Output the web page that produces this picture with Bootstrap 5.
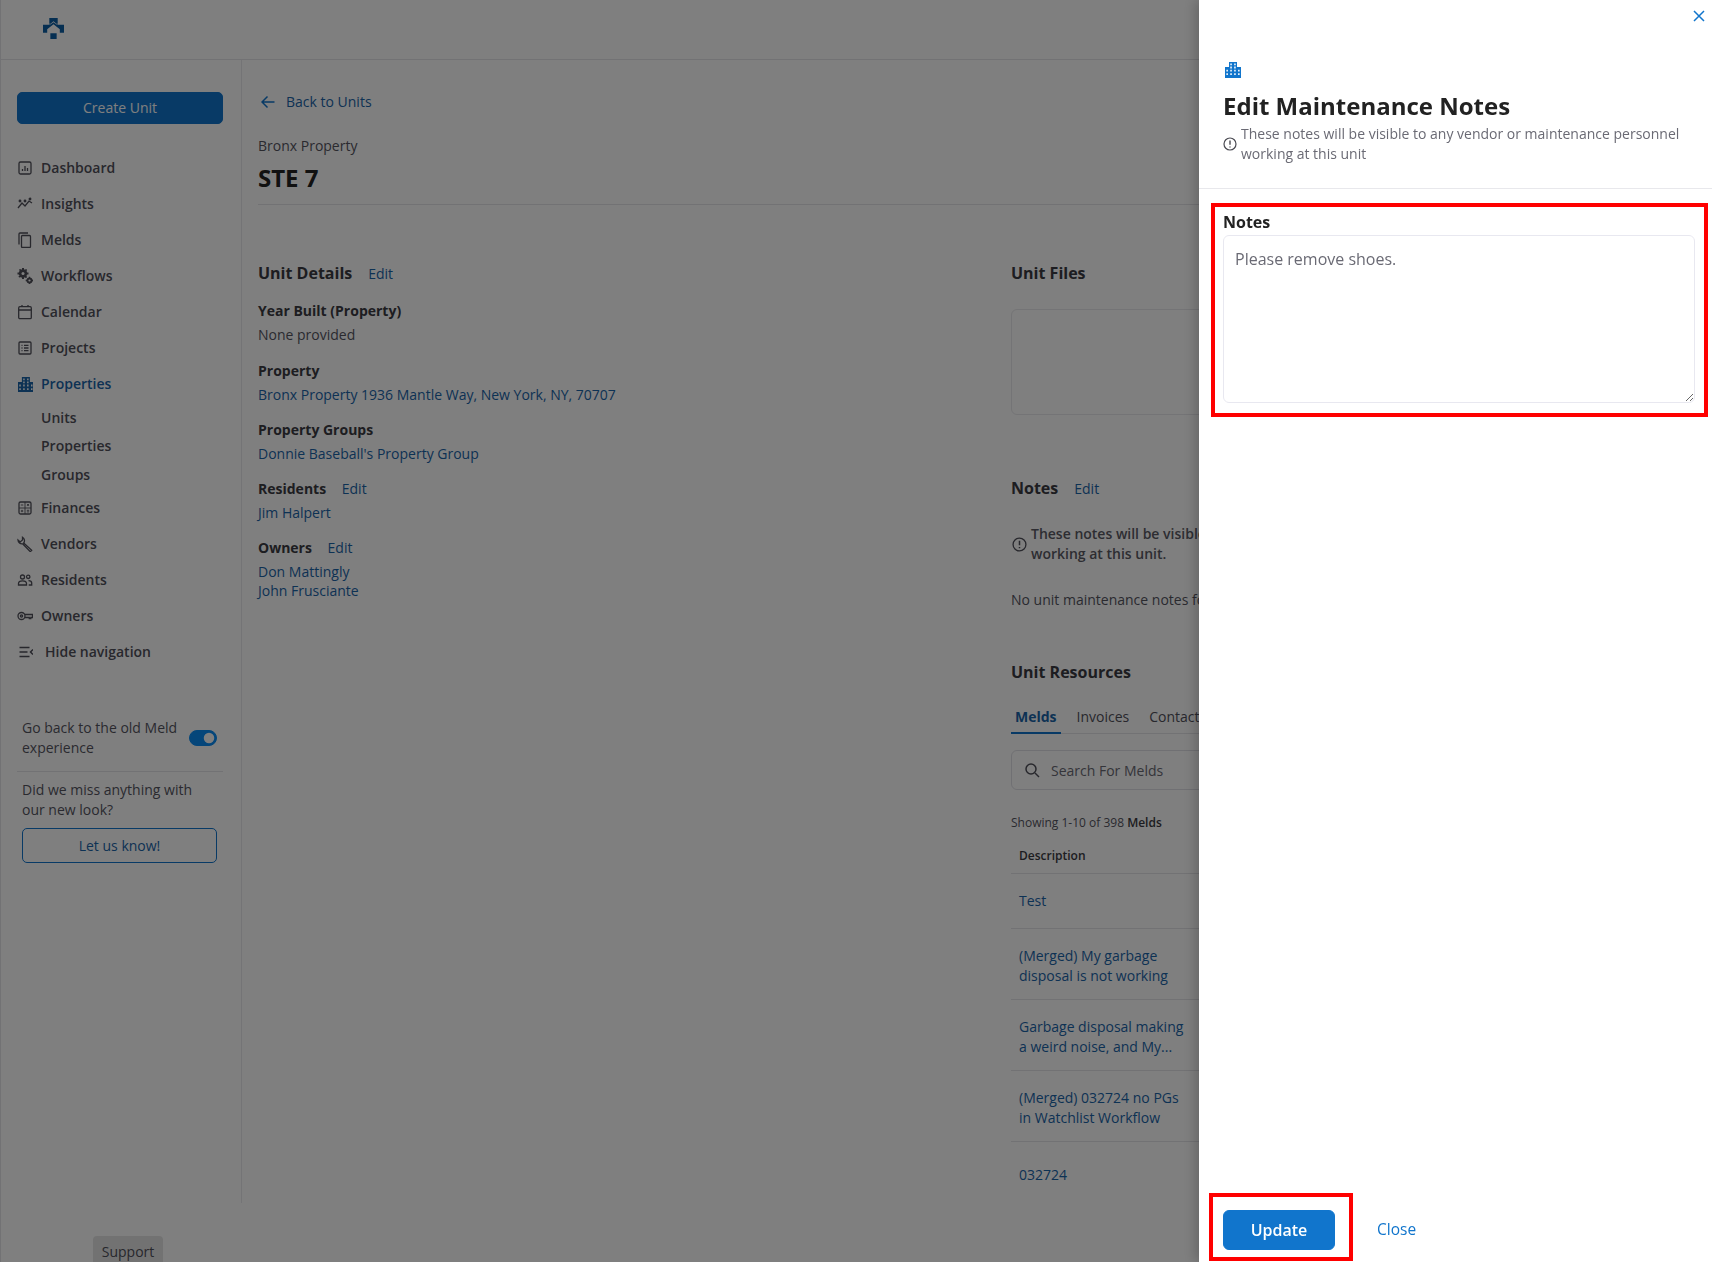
<!DOCTYPE html>
<html lang="en">
<head>
<meta charset="utf-8">
<title>Edit Maintenance Notes</title>
<link href="https://cdn.jsdelivr.net/npm/bootstrap@5.3.0/dist/css/bootstrap.min.css" rel="stylesheet">
<style>
:root{--brand:#1175cc;--link:#1a64a8;--ink:#55555f;--head:#222;}
html,body{height:100%;}
body{font-family:"Open Sans","Liberation Sans",sans-serif;font-size:14px;line-height:20px;color:var(--ink);background:#fff;overflow:hidden;}
a{color:var(--link);text-decoration:none;}
.app-root{height:1262px;border-left:1px solid #e4e4e8;}
.app-top{height:60px;border-bottom:1px solid #e4e4e8;padding:18px 0 0 42px;}
.app-top svg{display:block;width:21px;height:21px;fill:#0d5fa5;}
.app-side{width:241px;height:1143px;flex:none;border-right:1px solid #e8e8ec;padding:32px 16px 0 16px;}
.create-btn{display:block;width:206px;height:32px;padding:0;font-size:14px;line-height:30px;background:var(--brand);border:1px solid var(--brand);border-radius:5px;color:#fff;}
.side-list{margin:26px 0 0;padding:0;list-style:none;}
.side-link{display:flex;align-items:center;height:36px;color:#50505a;font-size:14px;font-weight:600;gap:8px;}
.side-link svg{width:16px;height:16px;flex:none;fill:none;stroke:currentColor;stroke-width:1.3;}
.side-link.on{color:var(--link);}
.side-sub{display:block;height:28.4px;line-height:28px;padding-left:24px;color:#50505a;font-weight:600;}
.side-sub-wrap{margin:1px 0 1px;padding-top:1px;}
.wide-ico{margin-right:4px;}
.old-row{margin:48px 0 0 5px;display:flex;align-items:center;justify-content:space-between;width:195px;}
.old-row .form-check-input{width:28px;height:16px;margin:0;float:none;background-color:#0a8cf5;border-color:#0a8cf5;}
.old-row .form-switch{padding:0;min-height:0;margin:0;display:flex;}
.side-rule{margin:13px 0 8px;border-top:1px solid #e4e4e8;opacity:1;width:206px;}
.miss-wrap{margin-left:5px;width:195px;}
.know-btn{display:block;width:195px;height:35px;margin-top:8px;padding:0;font-size:14px;line-height:33px;border:1px solid var(--brand);color:var(--link);border-radius:5px;background:#fff;}
.app-main{padding:32px 0 0 16px;flex:1;min-width:0;}
.back-link{display:flex;align-items:center;height:20px;gap:11px;padding-left:3px;}
.back-link svg{width:14px;height:14px;fill:none;stroke:var(--brand);stroke-width:1.5;}
.crumb{margin:24px 0 0;}
.unit-name{font-size:24px;line-height:32px;font-weight:700;color:var(--head);margin:6px 0 0;}
.head-rule{margin:10px 0 0;border-top:1px solid #e4e4e8;opacity:1;}
.cols{display:flex;margin-top:56px;}
.col-left{width:753px;flex:none;}
.col-right{width:680px;flex:none;}
.sec-title{font-size:16px;line-height:24px;font-weight:700;color:#3a3a42;margin:0;display:inline-block;}
.sec-edit{margin-left:16px;}
.fact{margin-bottom:15px;}
.fact-first{margin-bottom:16px;}
.fact-label{font-weight:700;color:#3a3a42;margin:0 0 4px;}
.fact-label a{font-weight:400;margin-left:12px;}
.facts{margin-top:16px;}
.fact .tight{line-height:19px;}
.files-box{height:106px;margin-top:24px;border:1px solid #e8e8ec;border-radius:6px;}
.notes-head{margin-top:61px;}
.info-line{display:flex;align-items:center;gap:4px;margin-top:24px;width:500px;color:#5a5a64;font-weight:600;}
.info-line svg{width:15px;height:15px;flex:none;fill:none;stroke:#50505a;margin:0 0 0 1px;}
.no-notes{margin:26px 0 0;}
.res-head{margin-top:50px;}
.res-tabs{margin-top:19px;border-bottom:1px solid #e4e4e8;display:flex;gap:10px;height:31px;}
.res-tab{padding:0 5px;height:31px;line-height:27px;color:#50505a;}
.res-tab.on{color:var(--link);font-weight:700;border-bottom:2px solid var(--brand);padding:0 4px;margin-right:1px;}
.search-box{position:relative;margin-top:16px;height:40px;}
.search-box input{height:40px;padding-left:39px;font-size:14px;border-color:#e0e0e6;border-radius:6px;box-shadow:none;}
.search-box input::placeholder{color:#6a6a74;}
.search-box svg{position:absolute;left:13px;top:12px;width:16px;height:16px;fill:none;stroke:#50505a;stroke-width:1.5;}
.showing{font-size:12px;line-height:16px;margin-top:25px;}
.showing b{font-weight:600;color:#3a3a42;}
.meld-table{margin:17px 0 0;width:680px;border-color:#e4e4e8;}
.meld-table th{font-size:12px;font-weight:600;color:#3a3a42;padding:0 8px 9px;line-height:16px;border-bottom:1px solid #e4e4e8;background:transparent;}
.meld-table td{padding:17px 8px 13px;line-height:20px;font-size:14px;background:transparent;border-bottom:1px solid #e4e4e8;}
.meld-table tr.row-one td{padding:17px 8px 17px;}
.meld-table .d-col{width:182px;}
.meld-table tr.row-end td{padding-top:23px;border-bottom:0;}
.support-tab{position:fixed;left:93px;top:1236px;width:70px;height:33px;background:#e5e5e5;border-radius:4px 4px 0 0;text-align:center;line-height:31px;color:#50505a;}
.edit-panel{width:513px;height:1262px;z-index:1045;box-shadow:-4px 0 12px rgba(0,0,0,.2);color:#6a6a74;}
.close-row{display:flex;justify-content:flex-end;padding:10px 7px 0 0;height:62px;}
.close-x{width:12px;height:12px;padding:0;border:0;background:none;display:block;}
.close-x svg{display:block;width:12px;height:12px;stroke:var(--brand);stroke-width:1.5;fill:none;}
.panel-head{padding:0 24px 24px;border-bottom:1px solid #e8e8ec;height:127px;}
.building{width:16px;height:16px;display:block;fill:currentColor;}
.panel-bld{color:var(--brand);margin-left:2px;}
.panel-title{font-size:24px;line-height:32px;font-weight:700;color:#222;margin:12px 0 0;}
.panel-info{display:flex;align-items:center;gap:4px;margin-top:2px;}
.panel-info svg{width:14px;height:14px;flex:none;fill:none;stroke:#4a4a52;}
.shot-mark{border:4px solid #f00;}
.notes-mark{margin:14px 4px 0 12px;padding:5px 9px 10px 8px;height:214px;}
.notes-label{display:block;margin:0 0 3px;font-size:16px;line-height:20px;font-weight:700;color:#222;}
.notes-input{height:168px;font-size:16px;line-height:24px;color:#6a6a74;border-color:#e8e8f0;border-radius:6px;padding:11px 11px;}
.panel-foot{margin-top:auto;display:flex;align-items:flex-start;padding:0 0 1px 10px;}
.update-mark{padding:13px 14px 7px 10px;width:144px;height:68px;}
.update-btn{width:112px;height:40px;padding:0;font-size:16px;line-height:38px;font-weight:600;background:var(--brand);border-color:var(--brand);border-radius:6px;color:#fff;}
.close-link{margin:24px 0 0 24px;font-size:15.5px;line-height:24px;color:var(--brand);}
</style>
</head>
<body>
<svg width="0" height="0" class="position-absolute">
  <symbol id="bld" viewBox="0 0 16 16"><path fill-rule="evenodd" d="M4 0h8v5h4v11H0V5h4zM5.300 1.500v1.800h1.500V1.500zm3.900 0v1.800h1.500V1.500zM5.300 4.600v1.800h1.500V4.600zm3.900 0v1.800h1.500V4.600zM1.400 7.700v1.800h1.500V7.700zm3.900 0v1.800h1.500V7.700zm3.900 0v1.800h1.500V7.700zm3.900 0v1.800h1.500V7.700zM1.400 11.300v1.800h1.500v-1.800zm3.900 0v1.800h1.500v-1.800zm3.900 0v1.800h1.500v-1.800zm3.900 0v1.800h1.500v-1.800z"/></symbol>
  <symbol id="inf" viewBox="0 0 14 14"><circle cx="7" cy="7" r="6" stroke-width="1.200"/><path d="M7 3.600v4.200M7 9.400v1.200" stroke-width="1.400"/></symbol>
</svg>

<div class="app-root">
  <div class="app-top">
    <svg viewBox="0 0 20 20"><path d="M6 0h8v5.500h-1.200L10 3 7.200 5.500H6zM0 6.500h5.800l.2-.2v-.4l1 .4L10 4l3 2.300.9-.4.300.6H20v7.500h-4v-3.300l-6-4.800-6 4.800v3.300H0zM7 14.500h6V20H7z"/></svg>
  </div>
  <div class="d-flex">
    <aside class="app-side">
      <button type="button" class="btn create-btn">Create Unit</button>
      <ul class="side-list">
        <li><a class="side-link" href="#"><svg viewBox="0 0 16 16"><rect x="2" y="2" width="12" height="12" rx="1.500"/><path d="M5.500 11V9M8 11V6M10.500 11V8"/></svg>Dashboard</a></li>
        <li><a class="side-link" href="#"><svg viewBox="0 0 16 16"><path d="M1 12l4-5 3 3 4-5 3 2"/><circle cx="3" cy="5" r=".8" fill="currentColor"/><circle cx="8" cy="5" r=".8" fill="currentColor"/><circle cx="13" cy="3" r=".8" fill="currentColor"/></svg>Insights</a></li>
        <li><a class="side-link" href="#"><svg viewBox="0 0 16 16"><rect x="4.500" y="3.500" width="9" height="12" rx="1"/><path d="M2 12.500V2a1 1 0 0 1 1-1h8"/></svg>Melds</a></li>
        <li><a class="side-link" href="#"><svg viewBox="0 0 16 16"><g fill="currentColor" stroke="none"><circle cx="6" cy="5.500" r="4.200"/><path d="M5 0h2v2H5zM5 9h2v2H5zM.5 4.500h2v2h-2zM9.500 4.500h2v2h-2zM2 1.500l1.500-.5 1 1.500L3 3.500zM8.500 1l1.500.5-.5 2-1.500-1zM2 9.500l-.5-1.500 2-.5 1 1.500zM10 9.500l-1.500.5-1-1.500 2-1z"/><circle cx="12.500" cy="12.500" r="3"/><path d="M11.800 8.700h1.400v1.600h-1.400zM11.800 14.700h1.400v1.600h-1.400zM8.700 11.800h1.600v1.400H8.700zM14.700 11.800h1.600v1.400h-1.600z"/></g><circle cx="6" cy="5.500" r="1.500" fill="#fff" stroke="none"/><circle cx="12.500" cy="12.500" r="1.100" fill="#fff" stroke="none"/></svg>Workflows</a></li>
        <li><a class="side-link" href="#"><svg viewBox="0 0 16 16"><rect x="1.700" y="2.700" width="12.600" height="12" rx="1.200"/><path d="M1.700 6h12.600M5 1v2M11 1v2"/></svg>Calendar</a></li>
        <li><a class="side-link" href="#"><svg viewBox="0 0 16 16"><rect x="2" y="2" width="12" height="12" rx="1"/><path d="M4.500 5.300h1M7 5.300h4.500M4.500 8h1M7 8h4.500M4.500 10.700h1M7 10.700h4.500"/></svg>Projects</a></li>
        <li><a class="side-link on" href="#"><svg viewBox="-1 -1 18 18" style="stroke:none;fill:currentColor"><use href="#bld"/></svg>Properties</a>
          <div class="side-sub-wrap">
            <a class="side-sub" href="#">Units</a>
            <a class="side-sub" href="#">Properties</a>
            <a class="side-sub" href="#">Groups</a>
          </div>
        </li>
        <li><a class="side-link" href="#"><svg viewBox="0 0 16 16"><rect x="2" y="2" width="12" height="12" rx="1.500"/><path d="M8 2v12M2 8h12M3.800 5h2.500M10 3.900l2 2M12 3.900l-2 2M3.800 11h2.500M5 9.800v2.400M9.800 10.300h2.400M9.800 11.900h2.400" stroke-width=".9"/></svg>Finances</a></li>
        <li><a class="side-link" href="#"><svg viewBox="0 0 16 16"><path d="M5.500 1.200A4 4 0 0 1 6.700 7l8 7.200-1.400 1.500L5.600 7.800A4 4 0 0 1 1 4l2.200 1.900L5.500 4z"/></svg>Vendors</a></li>
        <li><a class="side-link" href="#"><svg viewBox="0 0 16 16"><circle cx="5.500" cy="5" r="2"/><circle cx="11.200" cy="4.800" r="1.700"/><path d="M1.500 13v-1.500c0-1.800 1.800-2.700 4-2.700s4 .9 4 2.700V13zM11.500 8.600c1.800 0 3.200.9 3.200 2.500V13h-3"/></svg>Residents</a></li>
        <li><a class="side-link" href="#"><svg viewBox="0 0 16 16"><circle cx="4.500" cy="8" r="3.500"/><circle cx="4.500" cy="8" r="1.100"/><path d="M8 6.500h7.500v3h-1.700v1.200h-1.500V9.500H8"/></svg>Owners</a></li>
        <li><a class="side-link" href="#"><svg class="wide-ico" viewBox="-1 0 16 16" style="stroke-width:1.500"><path d="M1.500 3.500h10M1.500 8h8M1.500 12.500h10M15 5.500 12.500 8 15 10.500"/></svg>Hide navigation</a></li>
      </ul>
      <div class="old-row">
        <span style="width:160px">Go back to the old Meld experience</span>
        <div class="form-check form-switch"><input class="form-check-input" type="checkbox" role="switch" checked aria-label="Old experience"></div>
      </div>
      <hr class="side-rule">
      <div class="miss-wrap">
        <div>Did we miss anything with our new look?</div>
        <button type="button" class="btn know-btn">Let us know!</button>
      </div>
    </aside>
    <main class="app-main">
      <a class="back-link" href="#"><svg viewBox="0 0 14 14"><path d="M13.500 7H1M6.500 1.500 1 7l5.500 5.500"/></svg>Back to Units</a>
      <p class="crumb">Bronx Property</p>
      <h1 class="unit-name">STE 7</h1>
      <hr class="head-rule">
      <div class="cols">
        <section class="col-left">
          <div><h2 class="sec-title">Unit Details</h2><a class="sec-edit" href="#">Edit</a></div>
          <div class="facts">
            <div class="fact fact-first"><p class="fact-label">Year Built (Property)</p><div>None provided</div></div>
            <div class="fact"><p class="fact-label">Property</p><a href="#">Bronx Property 1936 Mantle Way, New York, NY, 70707</a></div>
            <div class="fact"><p class="fact-label">Property Groups</p><a href="#">Donnie Baseball's Property Group</a></div>
            <div class="fact"><p class="fact-label">Residents <a href="#">Edit</a></p><a href="#">Jim Halpert</a></div>
            <div class="fact"><p class="fact-label">Owners <a href="#">Edit</a></p><div class="tight"><a href="#">Don Mattingly</a><br><a href="#">John Frusciante</a></div></div>
          </div>
        </section>
        <section class="col-right">
          <h2 class="sec-title">Unit Files</h2>
          <div class="files-box"></div>
          <div class="notes-head"><h2 class="sec-title">Notes</h2><a class="sec-edit" href="#">Edit</a></div>
          <div class="info-line"><svg viewBox="0 0 14 14"><use href="#inf"/></svg><span>These notes will be visible to any vendor or maintenance personnel working at this unit.</span></div>
          <p class="no-notes">No unit maintenance notes found.</p>
          <h2 class="sec-title res-head">Unit Resources</h2>
          <div class="res-tabs"><span class="res-tab on">Melds</span><span class="res-tab">Invoices</span><span class="res-tab">Contacts</span></div>
          <div class="search-box"><svg viewBox="0 0 16 16"><circle cx="7" cy="7" r="5"/><path d="M11 11l4 4"/></svg><input class="form-control" type="text" placeholder="Search For Melds" aria-label="Search For Melds"></div>
          <div class="showing">Showing 1-10 of 398 <b>Melds</b></div>
          <table class="table meld-table">
            <thead><tr><th class="d-col">Description</th><th></th></tr></thead>
            <tbody>
              <tr class="row-one"><td class="d-col"><a href="#">Test</a></td><td></td></tr>
              <tr><td class="d-col"><a href="#">(Merged) My garbage disposal is not working</a></td><td></td></tr>
              <tr><td class="d-col"><a href="#">Garbage disposal making a weird noise, and My...</a></td><td></td></tr>
              <tr><td class="d-col"><a href="#">(Merged) 032724 no PGs in Watchlist Workflow</a></td><td></td></tr>
              <tr class="row-end"><td class="d-col"><a href="#">032724</a></td><td></td></tr>
            </tbody>
          </table>
        </section>
      </div>
    </main>
  </div>
</div>
<div class="support-tab">Support</div>

<div class="offcanvas-backdrop show"></div>
<div class="edit-panel position-fixed top-0 end-0 bg-white d-flex flex-column" role="dialog" aria-label="Edit Maintenance Notes">
  <div class="close-row"><button type="button" class="close-x" aria-label="Close"><svg viewBox="0 0 12 12"><path d="M1 1l10 10M11 1 1 11"/></svg></button></div>
  <div class="panel-head">
    <svg class="building panel-bld" viewBox="0 0 16 16"><use href="#bld"/></svg>
    <h2 class="panel-title">Edit Maintenance Notes</h2>
    <div class="panel-info"><svg viewBox="0 0 14 14"><use href="#inf"/></svg><span>These notes will be visible to any vendor or maintenance personnel working at this unit</span></div>
  </div>
  <div class="shot-mark notes-mark">
    <label class="notes-label" for="notes">Notes</label>
    <textarea class="form-control notes-input" id="notes">Please remove shoes.</textarea>
  </div>
  <div class="panel-foot">
    <div class="shot-mark update-mark"><button type="button" class="btn update-btn">Update</button></div>
    <a class="close-link" href="#">Close</a>
  </div>
</div>
<script src="https://cdn.jsdelivr.net/npm/bootstrap@5.3.0/dist/js/bootstrap.bundle.min.js"></script>
</body>
</html>
